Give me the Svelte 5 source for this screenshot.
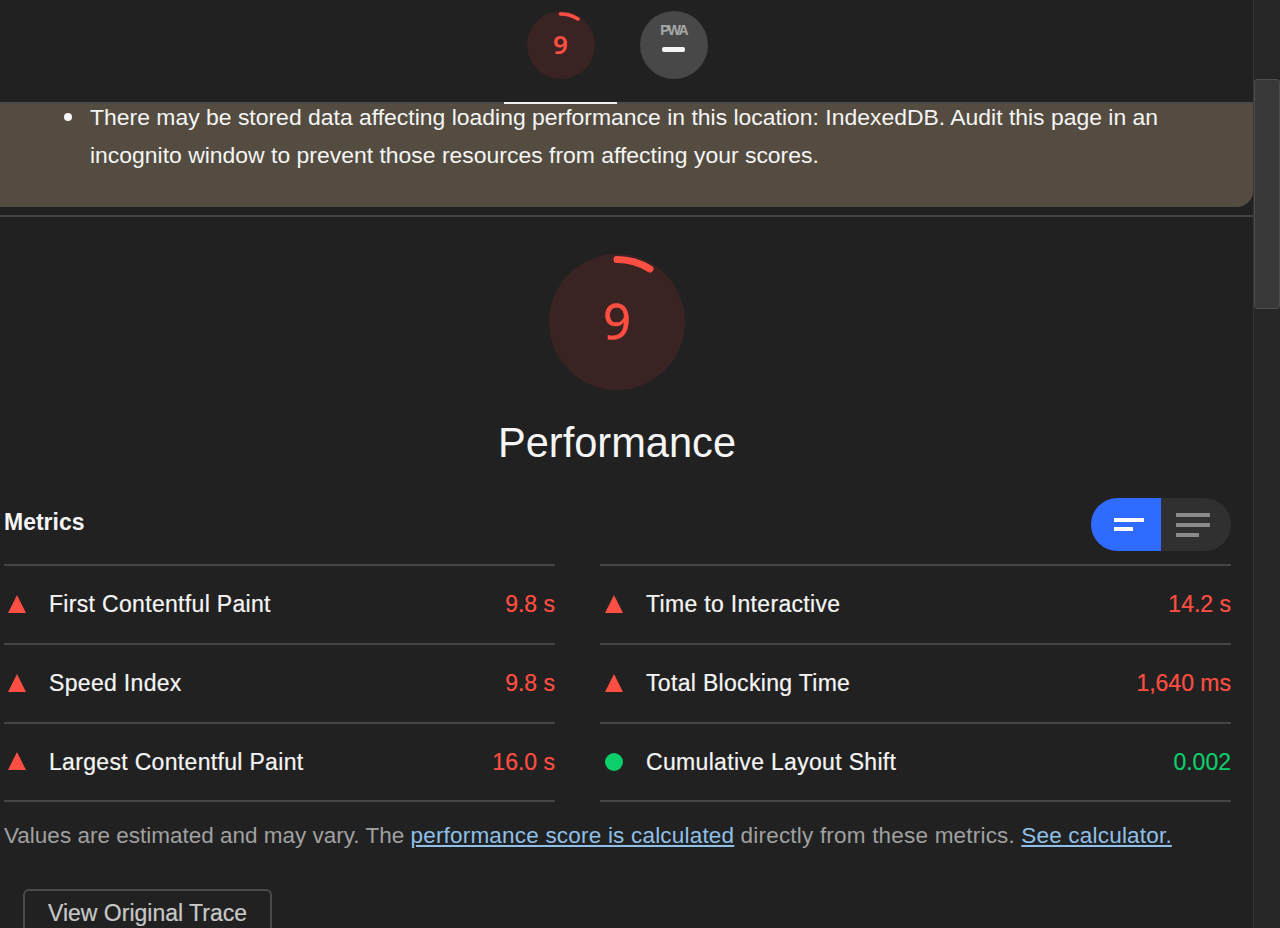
<script>
  const left = [
    { name: 'First Contentful Paint', value: '9.8 s', status: 'fail' },
    { name: 'Speed Index', value: '9.8 s', status: 'fail' },
    { name: 'Largest Contentful Paint', value: '16.0 s', status: 'fail' }
  ];
  const right = [
    { name: 'Time to Interactive', value: '14.2 s', status: 'fail' },
    { name: 'Total Blocking Time', value: '1,640 ms', status: 'fail' },
    { name: 'Cumulative Layout Shift', value: '0.002', status: 'pass' }
  ];
  const columns = [left, right];
</script>

<div class="window">
  <main class="report">
    <nav class="topbar">
      <div class="tab active">
        <div class="gauge-small">
          <svg viewBox="0 0 68 68" width="68" height="68">
            <circle cx="34" cy="34" r="34" fill="#3a2423" />
            <path d="M33.5 3 A31 31 0 0 1 51 8" fill="none" stroke="#ff4e42" stroke-width="3.5" stroke-linecap="round" />
          </svg>
          <span class="small-score">9</span>
        </div>
      </div>
      <div class="tab">
        <div class="pwa">
          <span class="pwa-label">PWA</span>
          <span class="pwa-dash"></span>
        </div>
      </div>
    </nav>

    <section class="warning">
      <ul>
        <li>There may be stored data affecting loading performance in this location: IndexedDB. Audit this page in an incognito window to prevent those resources from affecting your scores.</li>
      </ul>
    </section>

    <hr class="divider" />

    <section class="score">
      <div class="gauge-large">
        <svg viewBox="0 0 136 136" width="136" height="136">
          <circle cx="68" cy="68" r="68" fill="#3a2423" />
          <path d="M68 5.5 A62.5 62.5 0 0 1 101 15" fill="none" stroke="#ff4e42" stroke-width="7" stroke-linecap="round" />
        </svg>
        <span class="large-score">9</span>
      </div>
      <h1>Performance</h1>
    </section>

    <section class="metrics">
      <div class="metrics-head">
        <h2>Metrics</h2>
        <div class="toggle">
          <div class="toggle-on">
            <span class="bar bar-a"></span>
            <span class="bar bar-b"></span>
          </div>
          <div class="toggle-off">
            <span class="bar bar-c"></span>
            <span class="bar bar-c"></span>
            <span class="bar bar-d"></span>
          </div>
        </div>
      </div>

      <div class="grid">
        {#each columns as column}
          <div class="column">
            {#each column as metric}
              <div class="metric">
                {#if metric.status === 'fail'}
                  <svg class="icon tri" viewBox="0 0 18 18" width="18" height="18"><path d="M9 0 L18 18 L0 18 Z" fill="#ff4e42" /></svg>
                {:else}
                  <svg class="icon" viewBox="0 0 18 18" width="18" height="18"><circle cx="9" cy="9" r="9" fill="#0cce6b" /></svg>
                {/if}
                <span class="name">{metric.name}</span>
                <span class="value {metric.status}">{metric.value}</span>
              </div>
            {/each}
          </div>
        {/each}
      </div>

      <p class="note">Values are estimated and may vary. The <a href="#calc">performance score is calculated</a>{' '}<span class="mid">directly from these metrics.</span>{' '}<a href="#see">See calculator.</a></p>

      <button class="trace">View Original Trace</button>
    </section>
  </main>

  <aside class="scrollbar">
    <div class="thumb"></div>
  </aside>
</div>

<style>
  :global(body) {
    margin: 0;
    background: #212121;
  }

  .window {
    display: flex;
    width: 1280px;
    height: 928px;
    overflow: hidden;
    background: #212121;
    color: #f5f5f5;
    font-family: "Liberation Sans", Arial, sans-serif;
  }

  .report {
    width: 1253px;
    flex: none;
  }

  .topbar {
    display: flex;
    justify-content: center;
    height: 102px;
    box-sizing: border-box;
    padding-right: 19px;
    position: relative;
    z-index: 1;
  }

  .tab {
    width: 113px;
    height: 104px;
    box-sizing: border-box;
    padding-top: 11px;
    display: flex;
    justify-content: center;
    border-bottom: 2px solid transparent;
  }

  .tab.active {
    border-bottom-color: #f0f0f0;
  }

  .gauge-small {
    position: relative;
    width: 68px;
    height: 68px;
  }

  .gauge-small svg,
  .gauge-large svg {
    display: block;
  }

  .small-score {
    position: absolute;
    inset: 0;
    padding-bottom: 3px;
    box-sizing: border-box;
    display: flex;
    align-items: center;
    justify-content: center;
    color: #ff4e42;
    font-family: "Noto Sans", sans-serif;
    font-size: 26px;
    font-weight: 600;
  }

  .pwa {
    width: 68px;
    height: 68px;
    border-radius: 50%;
    background: #484848;
    display: flex;
    flex-direction: column;
    align-items: center;
    padding-top: 12px;
    box-sizing: border-box;
  }

  .pwa-label {
    color: #a8a8a8;
    font-size: 14px;
    font-weight: 700;
    line-height: 14px;
    letter-spacing: -1.8px;
  }

  .pwa-dash {
    width: 23px;
    height: 5px;
    margin-top: 10px;
    border-radius: 2px;
    background: #f5f5f5;
  }

  .warning {
    height: 105px;
    box-sizing: border-box;
    background: #544c40;
    border-top: 2px solid #4a4a46;
    border-bottom-right-radius: 16px;
    font-size: 22.95px;
    line-height: 38px;
  }

  .warning ul {
    margin: -6px 0 0;
    padding: 0 90px;
    list-style: none;
  }

  .warning li {
    position: relative;
  }

  .warning li::before {
    content: "";
    position: absolute;
    left: -26px;
    top: 15px;
    width: 8px;
    height: 8px;
    border-radius: 50%;
    background: #f5f5f5;
  }

  .divider {
    margin: 8px 0 0;
    border: 0;
    height: 2px;
    background: #454545;
  }

  .score {
    display: flex;
    flex-direction: column;
    align-items: center;
    padding-top: 37px;
    margin-left: -19px;
  }

  .gauge-large {
    position: relative;
    width: 136px;
    height: 136px;
  }

  .large-score {
    position: absolute;
    inset: 0;
    padding-bottom: 4px;
    box-sizing: border-box;
    display: flex;
    align-items: center;
    justify-content: center;
    color: #ff4e42;
    font-family: "Noto Sans", sans-serif;
    font-size: 49px;
    font-weight: 400;
    -webkit-text-stroke: 0.5px currentColor;
  }

  h1 {
    margin: 29px 0 0;
    font-size: 41.6px;
    line-height: 48px;
    font-weight: 400;
  }

  .metrics {
    padding: 0 22px 0 4px;
  }

  .metrics-head {
    display: flex;
    justify-content: space-between;
    align-items: center;
    margin-top: 31px;
    height: 53px;
  }

  h2 {
    margin: 0 0 4px;
    font-size: 23px;
    font-weight: 700;
  }

  .toggle {
    display: flex;
    width: 140px;
    height: 53px;
  }

  .toggle-on,
  .toggle-off {
    display: flex;
    flex-direction: column;
    justify-content: center;
  }

  .toggle-on {
    width: 70px;
    background: #2f6bff;
    border-radius: 27px 0 0 27px;
    padding-left: 23px;
    box-sizing: border-box;
    gap: 5px;
  }

  .toggle-off {
    width: 70px;
    background: #303030;
    border-radius: 0 27px 27px 0;
    padding-left: 15px;
    box-sizing: border-box;
    gap: 6px;
  }

  .bar {
    display: block;
    height: 4px;
  }

  .bar-a { width: 30px; background: #fff; }
  .bar-b { width: 19px; background: #fff; }
  .bar-c { width: 34px; background: #8a8a8a; }
  .bar-d { width: 23px; background: #8a8a8a; }

  .grid {
    display: grid;
    grid-template-columns: 551px 631px;
    column-gap: 45px;
    margin-top: 13px;
  }

  .column {
    border-top: 2px solid #454545;
  }

  .metric {
    display: flex;
    align-items: center;
    height: 77px;
    border-bottom: 2px solid #454545;
    font-size: 23px;
    -webkit-text-stroke: 0.2px currentColor;
  }

  .metric:last-child {
    height: 76px;
  }

  .icon {
    flex: none;
    margin-left: 4px;
  }

  .column + .column .icon {
    margin-left: 5px;
  }

  .tri {
    margin-bottom: 2px;
  }

  .name {
    margin-left: 23px;
    flex: 1;
    color: #f5f5f5;
    font-size: 23px;
    letter-spacing: 0.32px;
  }

  .value.fail { color: #ff4e42; }
  .value.pass { color: #0cce6b; }

  .note {
    margin: 21px 0 0;
    font-size: 22.5px;
    line-height: 26px;
    color: #a0a0a0;
  }

  .note a {
    color: #8fc0ea;
    text-decoration: underline;
    letter-spacing: 0.2px;
  }

  .mid {
    letter-spacing: 0.2px;
  }

  .trace {
    display: block;
    width: 249px;
    height: 60px;
    margin: 40px 0 0 19px;
    padding: 0 0 11px;
    box-sizing: border-box;
    background: transparent;
    border: 2px solid #4a4a4a;
    border-radius: 6px;
    color: #c8c8c8;
    font-family: inherit;
    font-size: 23px;
    -webkit-text-stroke: 0.2px currentColor;
  }

  .scrollbar {
    flex: 1;
    background: #262626;
    border-left: 1px solid #363636;
    padding-top: 79px;
    box-sizing: border-box;
  }

  .thumb {
    width: 26px;
    height: 230px;
    box-sizing: border-box;
    background: #383838;
    border: 1px solid #4d4d4d;
    border-radius: 3px;
  }
</style>
